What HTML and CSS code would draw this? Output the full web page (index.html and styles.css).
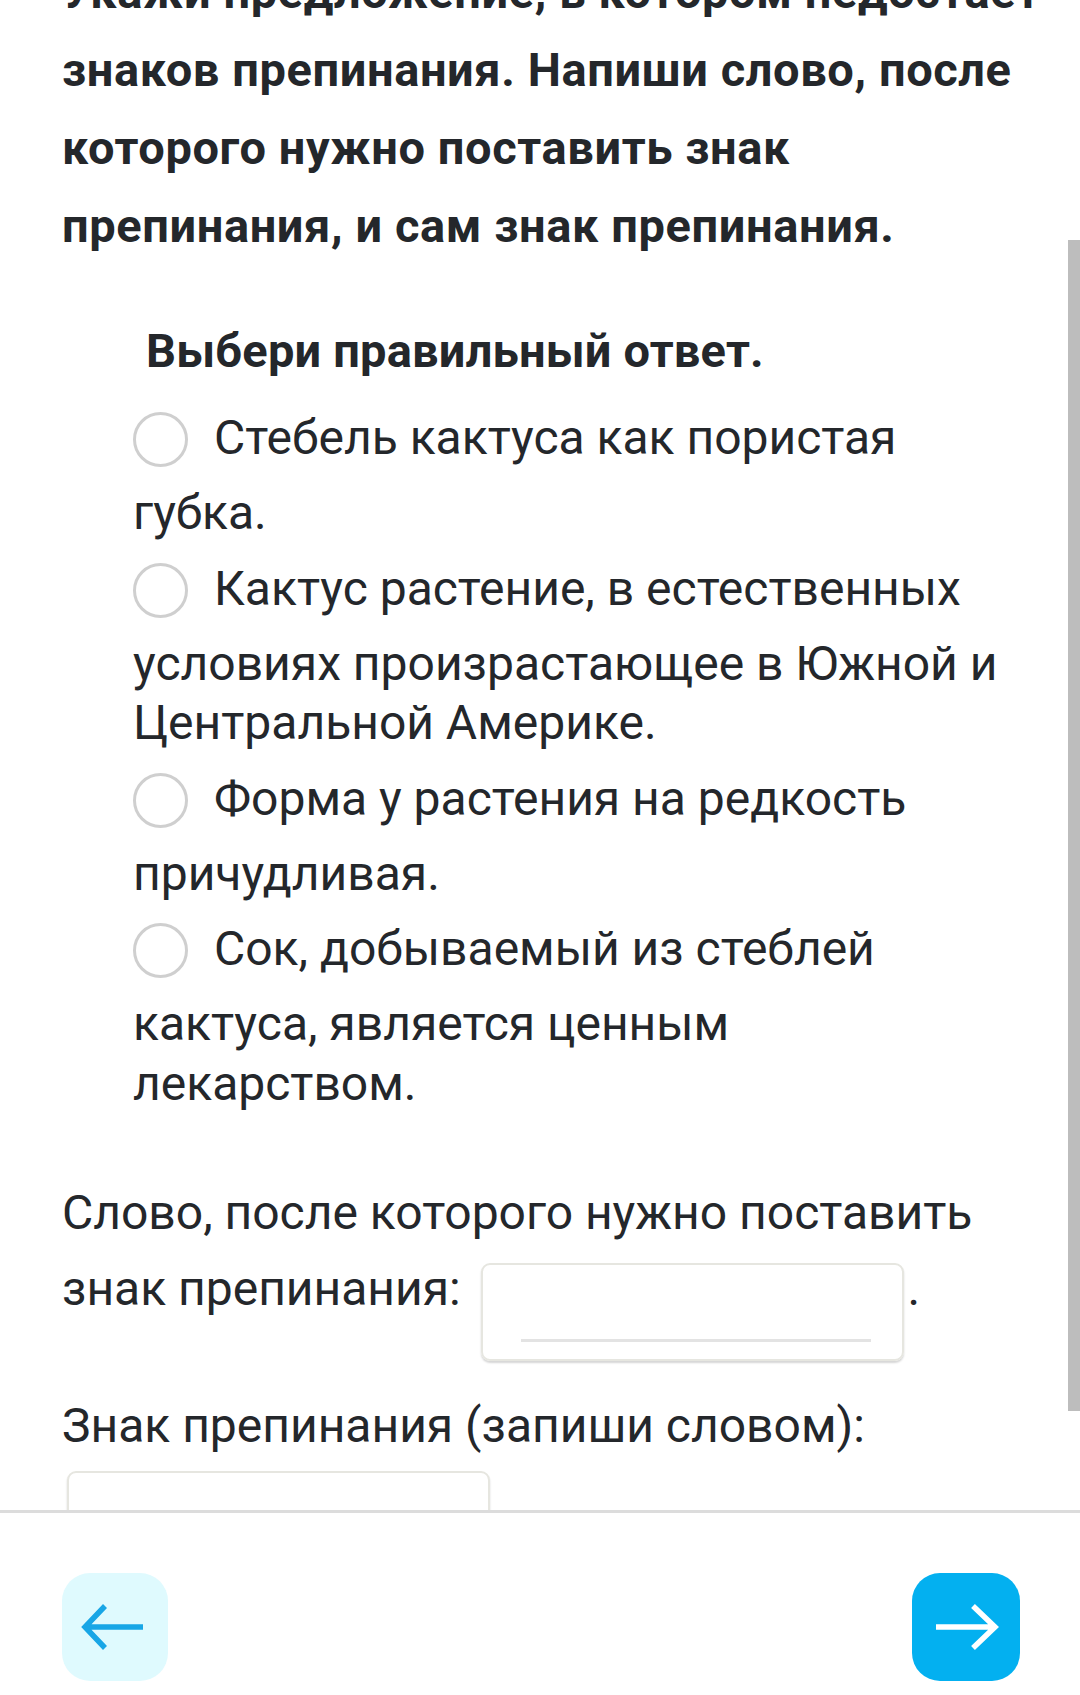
FILE: index.html
```html
<!DOCTYPE html>
<html>
<head>
    <meta charset="UTF-8" />
    <title>Задание</title>
    <link rel="stylesheet" href="styles.css">
</head>
<body>
    <div class="screen">
        <div class="content">
            <div class="inner">
                <p class="task">Укажи предложение, в котором недостает знаков препинания. Напиши слово, после которого нужно поставить знак препинания, и сам знак препинания.</p>

                <div class="choose">
                    <p class="choose-title">Выбери правильный ответ.</p>
                    <label class="option"><span class="radio"></span>Стебель кактуса как пористая губка.</label>
                    <label class="option"><span class="radio"></span>Кактус растение, в естественных условиях произрастающее в Южной и Центральной Америке.</label>
                    <label class="option"><span class="radio"></span>Форма у растения на редкость причудливая.</label>
                    <label class="option"><span class="radio"></span>Сок, добываемый из стеблей кактуса, является ценным лекарством.</label>
                </div>

                <p class="answer">Слово, после которого нужно поставить знак препинания: <span class="field"><span class="field-line"></span></span><span class="dot">.</span></p>
                <p class="answer answer-second">Знак препинания (запиши словом):</p>
                <div class="field field-block"></div>
            </div>
            <div class="scrollbar"></div>
        </div>

        <div class="footer">
            <button class="nav-btn nav-back">
                <svg width="106" height="108" viewBox="0 0 106 108">
                    <path d="M23 54 H81 M43 33 L23 54 L43 75" fill="none" stroke="#18a6e6" stroke-width="5.5"/>
                </svg>
            </button>
            <button class="nav-btn nav-next">
                <svg width="108" height="108" viewBox="0 0 108 108">
                    <path d="M24 54 H83 M61 33 L83 54 L61 75" fill="none" stroke="#ffffff" stroke-width="5.5"/>
                </svg>
            </button>
        </div>
    </div>
</body>
</html>
```

FILE: styles.css
```css
body {
    margin: 0;
    font-family: Roboto, "Noto Sans", sans-serif;
    color: #24272b;
    background: #fff;
}

.screen {
    width: 1080px;
    height: 1695px;
    display: flex;
    flex-direction: column;
}

.content {
    flex: 1;
    position: relative;
    overflow: hidden;
}

.inner {
    margin-top: -47px;
    padding: 0 62px;
}

p {
    margin: 0;
}

.task {
    margin-right: -30px;
    font-size: 47px;
    font-weight: bold;
    letter-spacing: 0.6px;
    line-height: 78px;
}

.choose {
    padding-left: 71px;
}

.choose-title {
    margin: 56px 0 11px 13px;
    font-size: 47px;
    font-weight: bold;
    letter-spacing: 0.2px;
    line-height: 60px;
}

.option {
    display: block;
    font-size: 48px;
    line-height: 59.5px;
}

.radio {
    display: inline-block;
    box-sizing: border-box;
    width: 55px;
    height: 55px;
    margin: 20px 26px 16px 0;
    border: 3px solid #cfcfcf;
    border-radius: 50%;
    vertical-align: -29px;
}

.answer {
    margin-top: 62px;
    font-size: 48px;
    line-height: 76px;
}

.answer-second {
    margin-top: 27px;
}

.field {
    display: inline-block;
    box-sizing: border-box;
    width: 423px;
    height: 98px;
    margin-left: 8px;
    padding: 74px 31px 0 38px;
    border: 2px solid #e6e6e0;
    border-radius: 9px;
    box-shadow: 0 2px 2px #d6d6d6;
    vertical-align: -56px;
}

.field-line {
    display: block;
    height: 3px;
    background: #e3e3e3;
}

.dot {
    margin-left: 4px;
}

.field-block {
    display: block;
    margin: 7px 0 0 5px;
}

.scrollbar {
    position: absolute;
    top: 240px;
    right: 0;
    width: 12px;
    height: 1171px;
    background: #bdbdbd;
}

.footer {
    height: 185px;
    box-sizing: border-box;
    border-top: 3px solid #dcdcdc;
    display: flex;
    justify-content: space-between;
    align-items: flex-start;
    padding: 60px 60px 0 62px;
}

.nav-btn {
    border: none;
    padding: 0;
    border-radius: 28px;
    height: 108px;
    display: flex;
    align-items: center;
    justify-content: center;
}

.nav-back {
    width: 106px;
    background: #dffafe;
}

.nav-next {
    width: 108px;
    background: #03b0f0;
}
```
